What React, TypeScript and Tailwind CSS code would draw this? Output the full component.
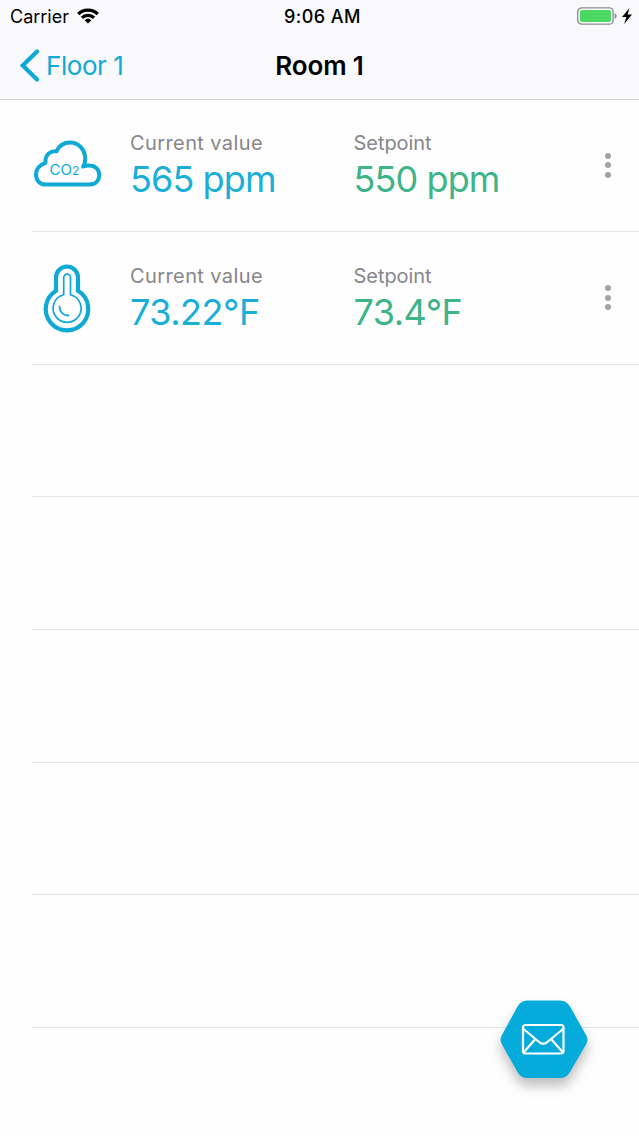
import React from 'react';

interface Reading {
  id: string;
  current: string;
  setpoint: string;
  valueClass: string;
  icon: React.ReactNode;
}

const CloudIcon = () => (
  <svg width="70" height="50" viewBox="0 0 70 50" fill="none" className="-mt-[3px]">
    <path
      d="M13.5 45.5H57.5C63.5 45.5 67.2 41.5 67.2 36C67.2 30.5 63 26.5 57.5 26.5Q54.5 26.1 51.2 27.4Q53.2 24.5 53.2 20C53.2 10.5 46.5 3.5 38 3.5C32 3.5 27 6.9 24.5 12.3C18 11.5 13.5 16 13.5 22V23.8C7 26 4 30 4 35.5C4 41 7.5 45.5 13.5 45.5Z"
      stroke="#0fa9d6"
      strokeWidth="4"
      strokeLinejoin="round"
    />
    <text x="17.5" y="35.5" fill="#0fa9d6" fontSize="15" fontFamily="Inter, sans-serif">CO</text>
    <text x="40" y="35.5" fill="#0fa9d6" fontSize="12" fontFamily="Inter, sans-serif">2</text>
  </svg>
);

const ThermometerIcon = () => (
  <svg width="50" height="70" viewBox="0 0 50 70" fill="none" stroke="#0fa9d6">
    <path d="M14 27.8V14.5A11 11 0 0 1 36 14.5V27.8A21.3 21.3 0 1 1 14 27.8Z" strokeWidth="4.2" />
    <path d="M21.7 31.8V14.5A3.4 3.4 0 0 1 28.5 14.5V31.8A14 14 0 1 1 21.7 31.8Z" strokeWidth="1.7" />
    <path d="M17.5 43.5C17.5 49 21.5 52.5 26.5 52.5" strokeWidth="1.8" strokeLinecap="round" />
  </svg>
);

const readings: Reading[] = [
  {
    id: 'co2',
    current: '565 ppm',
    setpoint: '550 ppm',
    valueClass: 'tracking-[-0.9px]',
    icon: <CloudIcon />,
  },
  {
    id: 'temperature',
    current: '73.22°F',
    setpoint: '73.4°F',
    valueClass: 'tracking-[-0.5px]',
    icon: <ThermometerIcon />,
  },
];

const emptyRows = [2, 3, 4, 5, 6];

const StatusBar = () => (
  <div className="grid h-8 grid-cols-3 items-center pr-[7px] pl-[10px] text-[18px]">
    <div className="flex items-center gap-2">
      <span>Carrier</span>
      <svg width="22" height="16" viewBox="0 0 22 16" fill="none" stroke="#000" strokeWidth="3.3">
        <path d="M1.2 6A14.2 14.2 0 0 1 20.8 6" />
        <path d="M4.9 9.8A9 9 0 0 1 17.1 9.8" />
        <path d="M11 15.5L7.6 12.2A5 5 0 0 1 14.4 12.2Z" fill="#000" stroke="none" />
      </svg>
    </div>
    <span className="pl-[3px] text-center font-medium tracking-[0.45px]">9:06 AM</span>
    <div className="flex items-center justify-end gap-[5px]">
      <svg width="40" height="18" viewBox="0 0 40 18">
        <rect x="0.8" y="0.8" width="35.4" height="16.4" rx="4" fill="#fff" stroke="#8b8b8b" strokeWidth="1.3" />
        <rect x="3" y="3" width="31" height="12" rx="2" fill="#4cd964" />
        <path d="M37.7 6V12Q39.7 11 39.7 9T37.7 6Z" fill="#8b8b8b" />
      </svg>
      <svg width="10" height="16" viewBox="0 0 10 16">
        <path d="M7.5 0L0 9H4.3L2.2 16L10 6.5H5.6Z" fill="#000" />
      </svg>
    </div>
  </div>
);

const NavBar = () => (
  <div className="grid h-[67px] grid-cols-3 items-center pl-5">
    <button className="flex items-center gap-[6px] text-[26px] text-[#0fa9d6]">
      <svg width="20" height="33" viewBox="0 0 20 33" fill="none" stroke="#0fa9d6" strokeWidth="4.2" strokeLinecap="round">
        <path d="M17 2.5L2.8 16.5L17 30.5" />
      </svg>
      <span className="tracking-[-0.45px]">Floor 1</span>
    </button>
    <h1 className="-ml-5 text-center text-[26px] font-semibold tracking-[-0.15px]">Room 1</h1>
  </div>
);

const ReadingRow = ({ reading }: { reading: Reading }) => (
  <li className="ml-8 flex h-[132.7px] border-b border-[#e3e3e5]">
    <div className="flex w-[70px] items-center justify-center">{reading.icon}</div>
    <div className="ml-7 w-[223.5px] pt-[30px]">
      <p className="text-[20px] leading-[28px] tracking-[0.4px] text-[#87868b]">Current value</p>
      <p className={`text-[36px] leading-[44px] text-[#19afd8] ${reading.valueClass}`}>{reading.current}</p>
    </div>
    <div className="flex-1 pt-[30px]">
      <p className="text-[20px] leading-[28px] tracking-[-0.05px] text-[#87868b]">Setpoint</p>
      <p className={`text-[36px] leading-[44px] text-[#3eb489] ${reading.valueClass}`}>{reading.setpoint}</p>
    </div>
    <button className="mr-7 flex flex-col items-center justify-center gap-[3.5px]">
      <span className="size-[6px] rounded-full bg-[#a3a2a6]" />
      <span className="size-[6px] rounded-full bg-[#a3a2a6]" />
      <span className="size-[6px] rounded-full bg-[#a3a2a6]" />
    </button>
  </li>
);

const MessageButton = () => (
  <button className="absolute right-[50px] bottom-[56px]">
    <svg width="90" height="80" viewBox="0 0 90 80" fill="none" className="overflow-visible drop-shadow-[0_8px_6px_rgba(0,0,0,0.25)]">
      <path
        d="M28 0.5H61Q67.5 0.5 71 6.5L87 35Q90 39.500 87 44.5L71 72Q67.5 78 61 78H28Q22 78 18.5 72L3 44.5Q0 39.500 3 35L18.5 6.5Q22 0.5 28 0.5Z"
        fill="#05abdb"
      />
      <g stroke="#fff" strokeWidth="2.2" strokeLinejoin="round">
        <rect x="24" y="25" width="40.5" height="28.5" rx="2.5" />
        <path d="M24.5 29L39.5 41.5Q44.25 46 49 41.5L64 29" />
        <path d="M24.5 52.500L36 39.5M64 52.500L52.5 39.5" />
      </g>
    </svg>
  </button>
);

export default function App() {
  return (
    <div className="relative h-[1136px] w-full overflow-hidden bg-[#fefefe] font-[Inter,sans-serif] text-black">
      <header className="h-[100px] border-b border-[#d3d2d6] bg-[#f9f8fb]">
        <StatusBar />
        <NavBar />
      </header>
      <ul className="-mt-[0.8px]">
        {readings.map((reading) => (
          <ReadingRow key={reading.id} reading={reading} />
        ))}
        {emptyRows.map((row) => (
          <li key={row} className="ml-8 h-[132.7px] border-b border-[#e3e3e5]" />
        ))}
      </ul>
      <MessageButton />
    </div>
  );
}
